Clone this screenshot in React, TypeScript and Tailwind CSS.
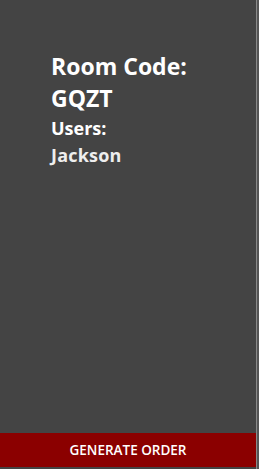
export default function App() {
  return (
    <div className="flex h-[469px] w-[259px] bg-[#444444]" style={{ fontFamily: "'Open Sans', 'Noto Sans', sans-serif" }}>
      <div className="flex w-[256px] flex-col">
        <div className="flex-1 pl-[51px] pt-[50px] text-white">
          <h1 className="text-[23px] font-bold leading-[32px]">Room Code:</h1>
          <h1 className="text-[23px] font-bold leading-[32px]">GQZT</h1>
          <h2 className="mt-[1px] text-[18px] font-bold leading-[27px]">Users:</h2>
          <p className="text-[18px] font-bold leading-[27px] text-[#eeeeee] tracking-[0.2px]">Jackson</p>
        </div>
        <button className="mb-[2px] h-[34px] w-full bg-[#8b0000] text-[13.5px] font-semibold text-white">
          GENERATE ORDER
        </button>
      </div>
      <div className="flex w-[3px]">
        <div className="w-[1px] bg-[#8a8a8a]" />
        <div className="w-[2px] bg-[#555555]" />
      </div>
    </div>
  );
}
